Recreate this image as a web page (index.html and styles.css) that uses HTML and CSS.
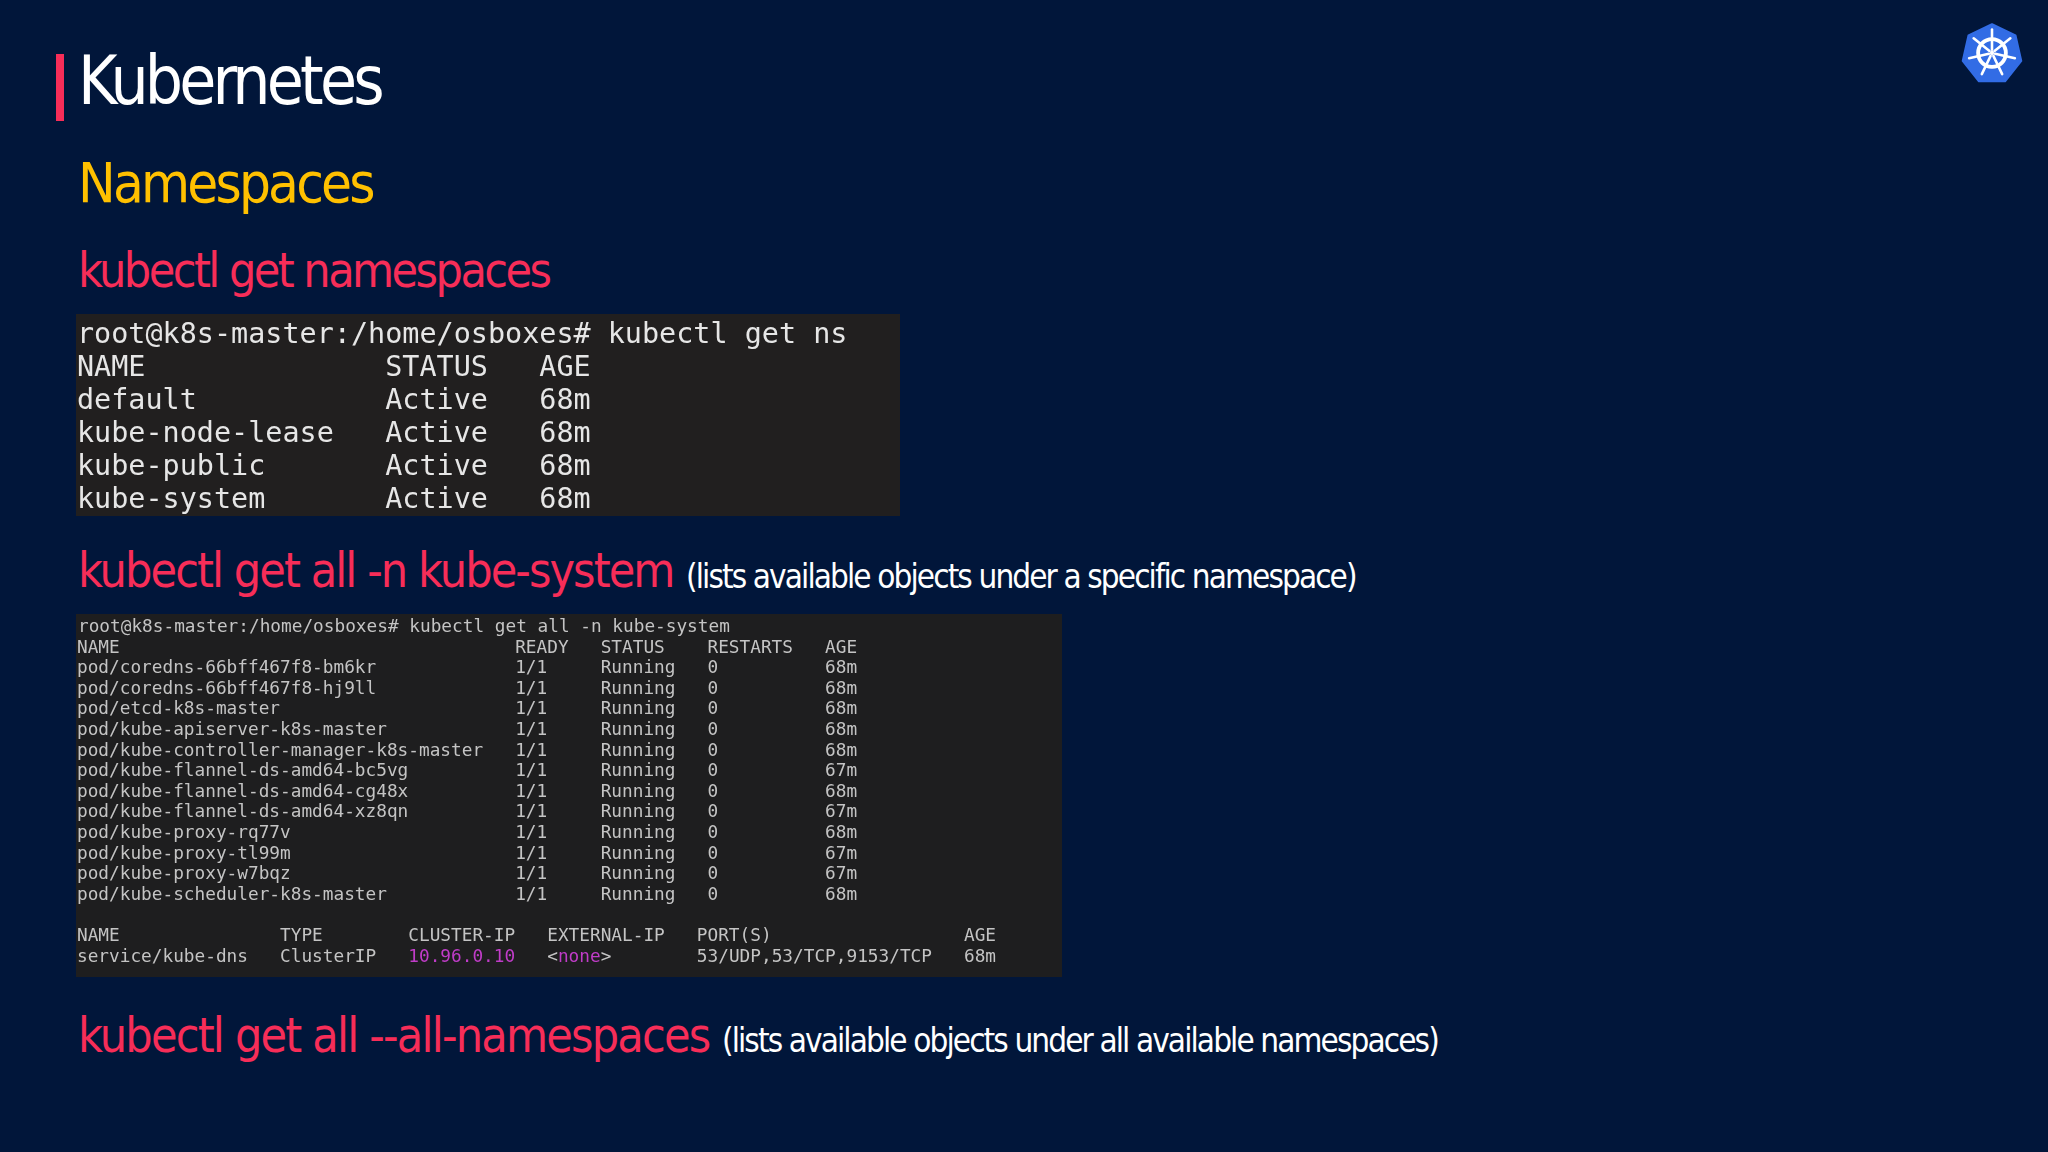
FILE: index.html
```html
<!DOCTYPE html>
<html lang="en">
<head>
<meta charset="utf-8">
<title>Kubernetes Namespaces</title>
<link rel="stylesheet" href="styles.css">
</head>
<body>
<main class="slide">
  <svg class="logo" viewBox="0 0 60 60" aria-label="Kubernetes logo">
    <polygon class="logo-hept" points="30,3 52,13.6 57.4,37.4 42.2,56.5 17.8,56.5 2.6,37.4 8,13.6"/>
    <g class="logo-wheel">
      <circle class="logo-ring" cx="30" cy="30" r="13"/>
      <circle class="logo-hub" cx="30" cy="30" r="2"/>
      <line x1="30" y1="27" x2="30" y2="8"/>
      <line x1="30" y1="27" x2="30" y2="8" transform="rotate(51.43 30 30)"/>
      <line x1="30" y1="27" x2="30" y2="8" transform="rotate(102.86 30 30)"/>
      <line x1="30" y1="27" x2="30" y2="8" transform="rotate(154.29 30 30)"/>
      <line x1="30" y1="27" x2="30" y2="8" transform="rotate(205.71 30 30)"/>
      <line x1="30" y1="27" x2="30" y2="8" transform="rotate(257.14 30 30)"/>
      <line x1="30" y1="27" x2="30" y2="8" transform="rotate(308.57 30 30)"/>
    </g>
  </svg>
  <header class="header">
    <span class="bar"></span>
    <h1 class="title">Kubernetes</h1>
  </header>
  <div class="content">
    <h2 class="subtitle">Namespaces</h2>
    <p class="cmd cmd-first"><span class="cmd-text">kubectl get namespaces</span></p>
    <pre class="term term-large">root@k8s-master:/home/osboxes# kubectl get ns
NAME              STATUS   AGE
default           Active   68m
kube-node-lease   Active   68m
kube-public       Active   68m
kube-system       Active   68m</pre>
    <p class="cmd cmd-second"><span class="cmd-text">kubectl get all -n kube-system</span> <span class="note">(lists available objects under a specific namespace)</span></p>
    <pre class="term term-small"><span class="first-line">root@k8s-master:/home/osboxes# kubectl get all -n kube-system</span>
NAME                                     READY   STATUS    RESTARTS   AGE
pod/coredns-66bff467f8-bm6kr             1/1     Running   0          68m
pod/coredns-66bff467f8-hj9ll             1/1     Running   0          68m
pod/etcd-k8s-master                      1/1     Running   0          68m
pod/kube-apiserver-k8s-master            1/1     Running   0          68m
pod/kube-controller-manager-k8s-master   1/1     Running   0          68m
pod/kube-flannel-ds-amd64-bc5vg          1/1     Running   0          67m
pod/kube-flannel-ds-amd64-cg48x          1/1     Running   0          68m
pod/kube-flannel-ds-amd64-xz8qn          1/1     Running   0          67m
pod/kube-proxy-rq77v                     1/1     Running   0          68m
pod/kube-proxy-tl99m                     1/1     Running   0          67m
pod/kube-proxy-w7bqz                     1/1     Running   0          67m
pod/kube-scheduler-k8s-master            1/1     Running   0          68m

NAME               TYPE        CLUSTER-IP   EXTERNAL-IP   PORT(S)                  AGE
service/kube-dns   ClusterIP   <span class="magenta">10.96.0.10</span>   &lt;<span class="magenta">none</span>&gt;        53/UDP,53/TCP,9153/TCP   68m</pre>
    <p class="cmd cmd-third"><span class="cmd-text">kubectl get all --all-namespaces</span> <span class="note">(lists available objects under all available namespaces)</span></p>
  </div>
</main>
</body>
</html>
```
FILE: styles.css
```css
html, body { margin: 0; padding: 0; }
body { background: #01163a; width: 2048px; height: 1152px; overflow: hidden; }
.slide {
  position: relative;
  width: 2048px;
  height: 1152px;
  box-sizing: border-box;
  padding: 54px 0 0 56px;
  font-family: "DejaVu Sans", sans-serif;
  font-stretch: condensed;
  color: #fff;
}
.logo { position: absolute; left: 1960px; top: 21px; width: 64px; height: 64px; }
.logo-hept { fill: #326ce5; stroke: #326ce5; stroke-width: 2; stroke-linejoin: round; }
.logo-wheel line { stroke: #fff; stroke-width: 2.4; stroke-linecap: round; }
.logo-ring { fill: none; stroke: #fff; stroke-width: 3.6; }
.logo-hub { fill: #fff; }
.header { display: flex; gap: 14px; height: 67px; }
.bar { width: 8px; height: 67px; background: #f72d58; }
.title { margin: 0; font-size: 67px; line-height: 55px; font-weight: 400; letter-spacing: -3.8px; }
.content { padding-left: 20px; }
.subtitle { margin: 32px 0 0; padding-left: 2px; font-size: 56px; line-height: 60px; font-weight: 400; letter-spacing: -2.8px; color: #ffc000; }
.cmd { margin: 0; padding-left: 2px; white-space: nowrap; line-height: 60px; height: 60px; }
.cmd-text { font-size: 48px; color: #f72d58; }
.note { font-size: 33px; letter-spacing: -1.9px; color: #fff; margin-left: 8px; }
.cmd-first { margin-top: 27px; }
.cmd-first .cmd-text { letter-spacing: -2.55px; }
.cmd-second { margin-top: 24px; }
.cmd-second .cmd-text { letter-spacing: -1.93px; }
.cmd-second .note { vertical-align: -1px; }
.cmd-third { margin-top: 28px; }
.cmd-third .cmd-text { letter-spacing: -1.8px; }
.term {
  margin: 0;
  font-family: "DejaVu Sans Mono", monospace;
  font-stretch: normal;
  white-space: pre;
  box-sizing: border-box;
}
.first-line { margin-left: 1px; }
.term-large { width: 824px; height: 202px; margin-top: 14px; padding: 3px 0 0 1px; background: #211f1f; color: #e6e6e6; font-size: 28.45px; line-height: 33px; filter: blur(0.4px); }
.term-small { width: 986px; height: 363px; margin-top: 14px; padding: 2px 0 0 1px; background: #1e1e1f; color: #c4c4c4; font-size: 17.75px; line-height: 20.6px; filter: blur(0.6px); }
.magenta { color: #c03cc8; }
```
